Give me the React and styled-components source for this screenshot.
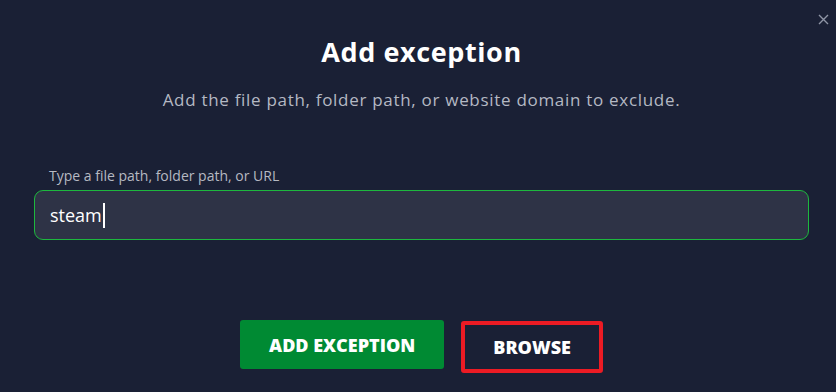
import React from "react";
import styled, { createGlobalStyle } from "styled-components";

const Global = createGlobalStyle`
  html, body { margin: 0; padding: 0; background: #1a2035; }
  body { font-family: "Open Sans", "Liberation Sans", sans-serif; }
`;

const Dialog = styled.div`
  position: relative;
  width: 836px;
  height: 392px;
  box-sizing: border-box;
  background: #1a2035;
  display: flex;
  flex-direction: column;
  align-items: center;
  padding: 34px 27px 0 34px;
`;

const Close = styled.button`
  position: absolute;
  top: 12px;
  right: 6px;
  width: 14px;
  height: 14px;
  padding: 0;
  border: 0;
  background: none;
  display: flex;
  align-items: center;
  justify-content: center;
`;

const Title = styled.h1`
  margin: 0;
  font-size: 27px;
  line-height: 36px;
  font-weight: 700;
  letter-spacing: 0.6px;
  color: #ffffff;
`;

const Subtitle = styled.p`
  margin: 19px 0 0;
  font-size: 17px;
  line-height: 22px;
  letter-spacing: 0.7px;
  color: #b4b8c3;
`;

const Field = styled.div`
  align-self: stretch;
  display: flex;
  flex-direction: column;
  margin-top: 56px;
`;

const Label = styled.label`
  font-size: 14px;
  line-height: 18px;
  color: #b6b9c2;
  padding-left: 15px;
  margin-bottom: 5px;
`;

const Input = styled.div`
  height: 50px;
  box-sizing: border-box;
  border: 1px solid #1db83e;
  border-radius: 9px;
  background: #2e3346;
  display: flex;
  align-items: center;
  padding-left: 15px;
  font-size: 18px;
  color: #ffffff;
`;

const Caret = styled.span`
  display: inline-block;
  width: 2px;
  height: 25px;
  background: #ffffff;
  margin-left: 1px;
`;

const Actions = styled.div`
  display: flex;
  align-items: flex-start;
  gap: 17px;
  margin-top: 80px;
`;

const Button = styled.button`
  height: ${(p) => (p.$primary ? "49px" : "52px")};
  margin-top: ${(p) => (p.$primary ? "0" : "1px")};
  box-sizing: border-box;
  padding: 0 ${(p) => (p.$primary ? "29px" : "28px")};
  border-radius: 3px;
  font-family: "Open Sans", "Liberation Sans", sans-serif;
  font-size: 18px;
  font-weight: 800;
  color: #ffffff;
  background: ${(p) => (p.$primary ? "#008a33" : "#1a2035")};
  border: ${(p) => (p.$primary ? "0" : "4px solid #ec1b24")};
`;

export default function App() {
  return (
    <>
      <Global />
      <Dialog>
        <Close aria-label="Close">
          <svg width="11" height="11" viewBox="0 0 11 11">
            <path d="M1 1L10 10M10 1L1 10" stroke="#8f95a6" strokeWidth="1.4" />
          </svg>
        </Close>
        <Title>Add exception</Title>
        <Subtitle>Add the file path, folder path, or website domain to exclude.</Subtitle>
        <Field>
          <Label>Type a file path, folder path, or URL</Label>
          <Input>
            steam<Caret />
          </Input>
        </Field>
        <Actions>
          <Button $primary>ADD EXCEPTION</Button>
          <Button>BROWSE</Button>
        </Actions>
      </Dialog>
    </>
  );
}
